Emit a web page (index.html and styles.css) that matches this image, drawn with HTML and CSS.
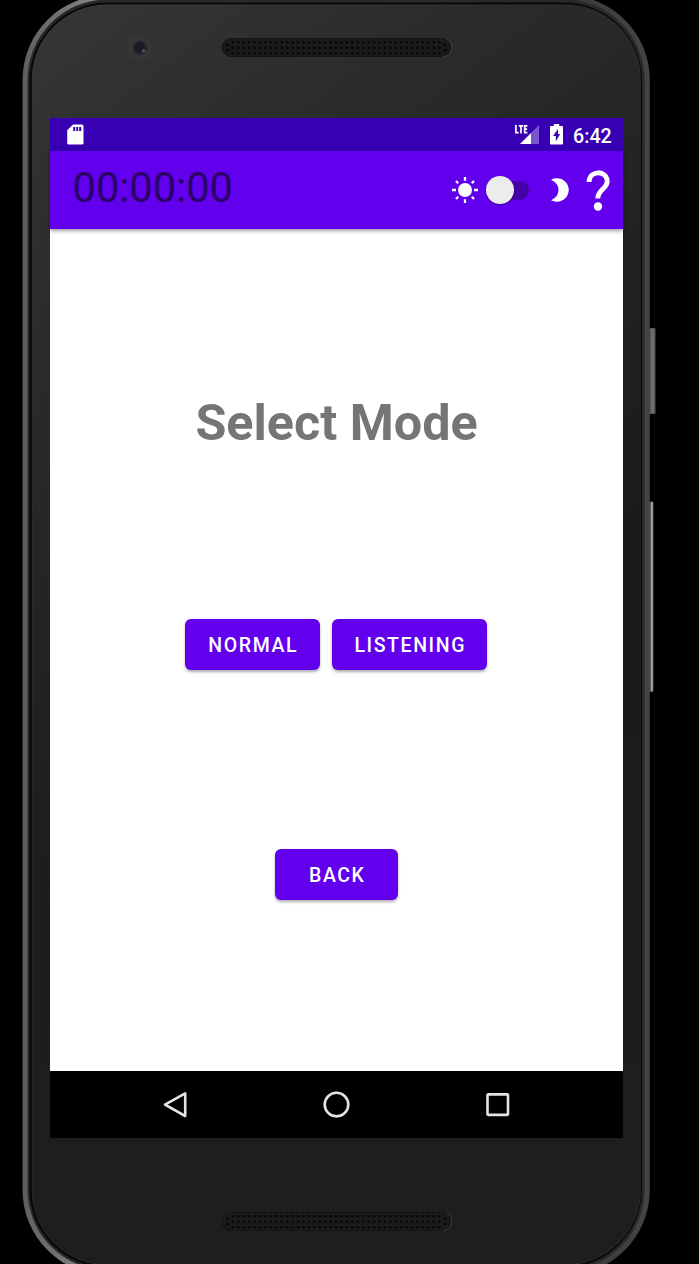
FILE: index.html
```html
<!DOCTYPE html>
<html lang="en">
<head>
<meta charset="utf-8">
<title>Select Mode</title>
<link rel="stylesheet" href="styles.css">
</head>
<body>
<div class="device">
  <svg class="device-body" width="699" height="1264" viewBox="0 0 699 1264" aria-hidden="true">
    <defs>
      <linearGradient id="rim" x1="0" y1="0" x2="1" y2="0">
        <stop offset="0" stop-color="#5c5c5c"/><stop offset=".012" stop-color="#646464"/><stop offset=".12" stop-color="#858585"/><stop offset=".2" stop-color="#555"/><stop offset=".45" stop-color="#242424"/><stop offset=".85" stop-color="#383838"/><stop offset="1" stop-color="#454344"/>
      </linearGradient>
      <linearGradient id="face" gradientUnits="userSpaceOnUse" x1="32" y1="0" x2="500" y2="620">
        <stop offset="0" stop-color="#363636"/><stop offset=".35" stop-color="#2b2b2b"/><stop offset="1" stop-color="#1b1b1b"/>
      </linearGradient>
      <linearGradient id="face-low" gradientUnits="userSpaceOnUse" x1="0" y1="700" x2="0" y2="1120">
        <stop offset="0" stop-color="#1e1e1e" stop-opacity="0"/><stop offset="1" stop-color="#1e1e1e"/>
      </linearGradient>
      <pattern id="holes" patternUnits="userSpaceOnUse" x="230.3" y="39.3" width="5.43" height="5.5">
        <circle cx="2.7" cy="2.7" r="1.45" fill="#050505"/><circle cx="3.5" cy="1.3" r=".5" fill="#343434"/>
      </pattern>
      <g id="grille">
        <rect x="222" y="38.5" width="229" height="18" rx="9" fill="#1a1a1a" stroke="#141414"/>
        <path d="M443 56.500c11 0 11-16 4-17" fill="none" stroke="#484848" stroke-width=".8"/>
        <rect x="230.3" y="39.3" width="211.8" height="16.5" fill="url(#holes)"/>
        <g fill="#050505"><circle cx="227.5" cy="45" r="1.3"/><circle cx="227.5" cy="50" r="1.3"/><circle cx="445" cy="45" r="1.3"/><circle cx="445" cy="50" r="1.3"/></g>
      </g>
    </defs>
    <rect x="649" y="328" width="6.5" height="86" rx="1" fill="#555"/>
    <rect x="651" y="329" width="3" height="84" fill="#6d6d6d"/>
    <rect x="649" y="501.500" width="4.500" height="190.500" rx="1" fill="#5a5a5a"/>
    <rect x="651" y="502" width="1.800" height="189" fill="#a0a0a0"/>
    <rect x="22.500" y="-5" width="627.300" height="1280" rx="85" fill="url(#rim)"/>
    <rect x="27.500" y="-.5" width="617" height="1270.500" rx="80" fill="#292929"/>
    <rect x="29.500" y="2.500" width="612.500" height="1265" rx="77.500" fill="#080808"/>
    <rect x="31.800" y="4.500" width="609" height="1260.500" rx="75" fill="url(#face)"/>
    <rect x="31.800" y="4.500" width="609" height="1260.500" rx="75" fill="url(#face-low)"/>
    <rect x="32.300" y="5" width="608" height="1259.500" rx="74.500" fill="none" stroke="#444" stroke-opacity=".2"/>
    <circle cx="139.300" cy="48" r="12" fill="#3a3a3a"/>
    <circle cx="139.300" cy="48" r="10.800" fill="#343535"/>
    <circle cx="140" cy="47.700" r="7" fill="#23222a"/>
    <circle cx="139.500" cy="47" r="4.500" fill="#1b1925"/>
    <circle cx="143.600" cy="50.700" r="1.500" fill="#76505b"/>
    <use href="#grille"/>
    <use href="#grille" y="1174"/>
  </svg>

  <div class="screen">
    <div class="status-bar">
      <svg width="17" height="21" viewBox="0 0 17 21"><path d="M6 .5h9q1.500 0 1.500 1.500v17q0 1.500-1.500 1.500H1.700Q.2 20.500.2 19V6.300z" fill="#fff"/><path d="M6.200 3h2v4h-2zm3 0h2v4h-2zm3 0h2v4h-2z" fill="#3700b3"/></svg>
      <div class="status-right">
        <svg class="signal" width="25" height="21" viewBox="0 0 25 21"><path d="M24 1v19h-8V9z" fill="#7a55cd"/><path d="M16 9v11H5z" fill="#fff"/><path d="M.9 1v7.700h2.800M3.800 1.800h4.400M6 1.800v7.700M12.400 1.800H9.700v6.900h2.700M9.700 5.200h2.400" fill="none" stroke="#fff" stroke-width="1.700"/></svg>
        <svg class="battery" width="13" height="21" viewBox="0 0 13 21"><path d="M3.800 0h5.400v2H12q1 0 1 1v16.500q0 1-1 1H1q-1 0-1-1V3q0-1 1-1h2.800z" fill="#fff"/><path d="M8 5 3 12h2.800v5.200L10.200 10H8z" fill="#3700b3"/></svg>
        <span class="clock">6:42</span>
      </div>
    </div>
    <header class="app-bar">
      <span class="timer">00:00:00</span>
      <div class="actions">
        <svg width="26" height="26" viewBox="0 0 26 26"><circle cx="13" cy="13" r="7" fill="#fff"/><path d="M13 0v3.700M13 22.300V26M0 13h4M22 13h4M4 4l2.200 2.200M19.800 19.800 22 22M4 22l2.200-2.200M19.800 6.200 22 4" stroke="#fff" stroke-width="2.300"/></svg>
        <span class="switch"><span class="thumb"></span></span>
        <svg class="moon" width="18" height="24" viewBox="0 0 18 24"><path d="M0 1.700Q2.500.3 6 .3A11.700 11.700 0 0 1 6 23.700Q2.500 23.700 0 22.300 7.500 19 7.500 12T0 1.700z" fill="#fff"/></svg>
        <svg class="help" width="24" height="42" viewBox="0 0 24 42"><path d="M3 12C3.500-.3 21.200 0 21.200 11.500c0 7-9.400 8.500-9.400 17" fill="none" stroke="#fff" stroke-width="4.900"/><circle cx="12" cy="36.500" r="4.200" fill="#fff"/></svg>
      </div>
    </header>
    <main class="content">
      <h1 class="title">Select Mode</h1>
      <div class="modes">
        <button class="btn normal">NORMAL</button>
        <button class="btn listening">LISTENING</button>
      </div>
      <button class="btn back">BACK</button>
    </main>
    <nav class="nav-bar">
      <svg width="26" height="28" viewBox="0 0 26 28"><path d="M23.200 2.300v22.700L3 13.700z"/></svg>
      <svg width="28" height="28" viewBox="0 0 28 28"><circle cx="13.500" cy="13.600" r="11.800"/></svg>
      <svg width="26" height="28" viewBox="0 0 26 28"><rect x="2.500" y="3.400" width="20.500" height="20.500" rx=".8"/></svg>
    </nav>
  </div>
</div>
</body>
</html>
```

FILE: styles.css
```css
* { box-sizing: border-box; }

body {
  margin: 0;
  background: #000;
  font-family: Roboto, "Liberation Sans", sans-serif;
}

.device {
  position: relative;
  width: 699px;
  height: 1264px;
  padding: 118px 76px 126px 50px;
  overflow: hidden;
}

/* Hardware artwork lies behind the screen */
.device-body {
  position: absolute;
  inset: 0;
}

svg { display: block; flex: none; }

.screen {
  position: relative;
  display: flex;
  flex-direction: column;
  height: 1020px;
  background: #fff;
}

.status-bar {
  display: flex;
  justify-content: space-between;
  height: 33px;
  padding: 6px 11px 0 17px;
  background: #3700b3;
}

.status-right { display: flex; }
.battery { margin-left: 10px; }

.clock {
  width: 39px;
  margin-left: 10px;
  color: #fff;
  font-size: 19.700px;
  font-weight: 500;
  line-height: 25px;
}

.app-bar {
  display: flex;
  justify-content: space-between;
  height: 78px;
  padding: 0 13px 0 22.500px;
  background: #6200ee;
  box-shadow: 0 2px 4px rgba(0, 0, 0, .38);
}

.timer {
  padding-top: 11px;
  color: #2b0068;
  font-size: 41.600px;
  line-height: 51px;
}

.actions {
  display: flex;
  align-items: center;
  height: 78px;
}

.switch {
  width: 38px;
  height: 19px;
  margin-left: 13px;
  border-radius: 10px;
  background: #4500a7;
}

.thumb {
  display: block;
  width: 28px;
  height: 28px;
  margin: -4.500px 0 0 -5.500px;
  border-radius: 50%;
  background: #ececec;
  box-shadow: 0 1px 2px rgba(0, 0, 0, .4);
}

.moon { margin-left: 22px; }
.help { margin: 2px 0 0 17px; }

.content {
  display: flex;
  flex: 1;
  flex-direction: column;
  align-items: center;
  padding-top: 164px;
}

.title {
  margin: 0;
  color: #757575;
  font-size: 50.300px;
  font-weight: 700;
  line-height: 60px;
}

.modes {
  display: flex;
  gap: 12px;
  margin: 166px 1px 0 0;
}

.btn {
  height: 51px;
  padding: 2px 0 0 1.500px;
  border: 0;
  border-radius: 6px;
  background: #6200ee;
  box-shadow: 0 2px 3px rgba(0, 0, 0, .32);
  color: #fff;
  font-family: inherit;
  font-size: 19.500px;
  font-weight: 500;
  letter-spacing: 1.600px;
}

.normal { width: 135px; }
.listening { width: 155px; }
.back { width: 122.500px; margin-top: 179px; }

.nav-bar {
  display: flex;
  justify-content: space-between;
  height: 67px;
  padding: 20px 112px 0 112px;
  background: #000;
}

.nav-bar svg {
  fill: none;
  stroke: #e4e4e4;
  stroke-width: 2.600;
  stroke-linejoin: round;
}
```
